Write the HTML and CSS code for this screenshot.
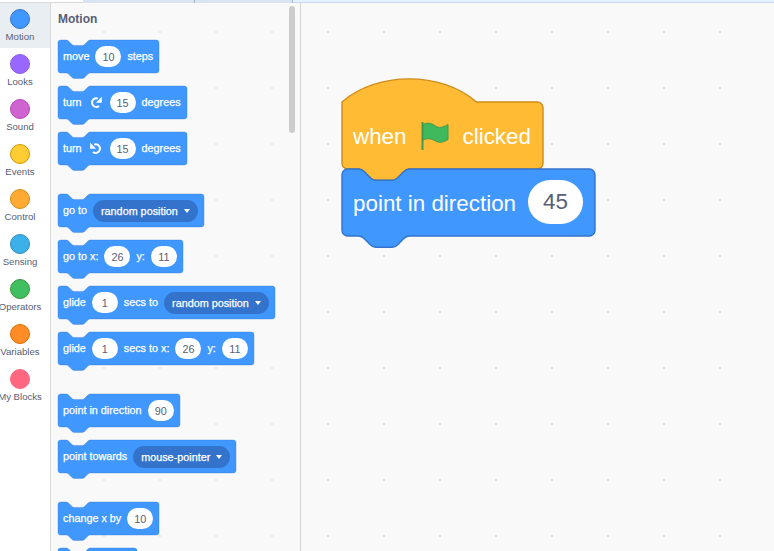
FILE: index.html
```html
<!DOCTYPE html>
<html lang="en">
<head>
  <meta charset="UTF-8">
  <title>Blocks Editor</title>
  <link rel="stylesheet" href="styles.css">
</head>
<body>

  <!-- Tab strip, cut off by the top of the window -->
  <div class="tabs">
    <div class="tab tab-blank"></div>
    <div class="tab tab-first"></div>
    <div class="tab tab-second"></div>
    <div class="tab tab-rest"></div>
  </div>

  <div class="editor">
    <!-- Categories -->
    <nav class="categories">
      <div class="category selected"><span class="dot motion"></span>Motion</div>
      <div class="category"><span class="dot looks"></span>Looks</div>
      <div class="category"><span class="dot sound"></span>Sound</div>
      <div class="category"><span class="dot events"></span>Events</div>
      <div class="category"><span class="dot control"></span>Control</div>
      <div class="category"><span class="dot sensing"></span>Sensing</div>
      <div class="category"><span class="dot operators"></span>Operators</div>
      <div class="category"><span class="dot variables"></span>Variables</div>
      <div class="category"><span class="dot myblocks"></span>My Blocks</div>
    </nav>

    <!-- Flyout -->
    <section class="flyout">
      <h2>Motion</h2>

      <div class="block">move <span class="num">10</span> steps</div>
      <div class="block">turn
        <svg class="turn" viewBox="0 0 14 14"><path d="M10 11A4.3 4.3 0 1 1 8.8 3.6" /><path class="head" d="M12.8 1.8V7.8H6.9Z" /></svg>
        <span class="num">15</span> degrees</div>
      <div class="block">turn
        <svg class="turn" viewBox="0 0 14 14"><path d="M4 11A4.3 4.3 0 1 0 5.2 3.6" /><path class="head" d="M1.2 1.8V7.8H7.1Z" /></svg>
        <span class="num">15</span> degrees</div>

      <div class="block group">go to <span class="menu">random position</span></div>
      <div class="block">go to x: <span class="num">26</span> y: <span class="num">11</span></div>
      <div class="block">glide <span class="num">1</span> secs to <span class="menu">random position</span></div>
      <div class="block">glide <span class="num">1</span> secs to x: <span class="num">26</span> y: <span class="num">11</span></div>

      <div class="block group">point in direction <span class="num">90</span></div>
      <div class="block">point towards <span class="menu">mouse-pointer</span></div>

      <div class="block group">change x by <span class="num">10</span></div>
      <div class="block stub"></div>

      <div class="scrollbar"></div>
    </section>

    <!-- Workspace -->
    <main class="workspace">
      <div class="script">
        <div class="block big hat">when
          <svg class="flag" viewBox="0 0 30 30"><path d="M2.5 1V29" /><path class="cloth" d="M3 3.5C8 1 12 2.5 15.5 5C19 7.5 23 6.5 28 3.5V18.5C23 21.5 19 22 15.5 20C12 18 8 16.5 3 19Z" /></svg>
          clicked</div>
        <div class="block big">point in direction <span class="num">45</span></div>
      </div>
    </main>
  </div>

  <script src="script.js"></script>
</body>
</html>
```

FILE: styles.css
```css
body {
  font-family: 'Liberation Sans', Arial, sans-serif;
  background: #f9f9f9;
  margin: 0;
  height: 551px;
  overflow: hidden;
}

.tabs {
  display: flex;
  height: 3px;
}

.tab-blank {
  width: 83px;
  background: #ffffff;
  border-bottom: 1px solid #d9d9d9;
  box-sizing: border-box;
}

.tab-first {
  width: 112px;
  background: #d9e3f2;
  border-right: 1px solid #a9b8cf;
  box-sizing: border-box;
}

.tab-second {
  width: 98px;
  background: #d9e3f2;
  border-right: 1px solid #a9b8cf;
  box-sizing: border-box;
}

.tab-rest {
  flex: 1;
  background: #e6f0ff;
  border-bottom: 1px solid #c9d8ee;
  box-sizing: border-box;
}

.editor {
  display: flex;
  height: 548px;
}

/* categories */
.categories {
  width: 51px;
  flex: none;
  box-sizing: border-box;
  background: #ffffff;
  border-right: 1px solid #d9d9d9;
  overflow: hidden;
}

.category {
  display: flex;
  flex-direction: column;
  align-items: center;
  height: 45px;
  padding: 6px 10px 0 0;
  box-sizing: border-box;
  font-size: 9.6px;
  line-height: 11px;
  color: #575e75;
  white-space: nowrap;
}

.category.selected {
  background: #e9eef2;
}

.dot {
  flex: none;
  width: 20px;
  height: 20px;
  margin-bottom: 2px;
  border-radius: 50%;
  border: 1px solid;
  box-sizing: border-box;
}

.motion { background: #4098ff; border-color: #3373cc; }
.looks { background: #9966ff; border-color: #8a5ce6; }
.sound { background: #cf63cf; border-color: #bd42bd; }
.events { background: #ffcc33; border-color: #cc9900; }
.control { background: #ffab33; border-color: #cf8b17; }
.sensing { background: #3cb0e8; border-color: #2e8eb8; }
.operators { background: #40bf60; border-color: #389438; }
.variables { background: #ff8c26; border-color: #db6e00; }
.myblocks { background: #ff6680; border-color: #ff6680; }

/* flyout */
.flyout {
  position: relative;
  isolation: isolate;
  width: 250px;
  flex: none;
  box-sizing: border-box;
  padding: 0 0 0 7px;
  border-right: 1px solid #d4d4d4;
  display: flex;
  flex-direction: column;
  align-items: flex-start;
  overflow: hidden;
  background-image: radial-gradient(circle at 1px 1px, #e9e9e9 1px, transparent 1.2px);
  background-size: 56px 56px;
  background-position: 52px 28px;
}

.flyout h2 {
  font-size: 12px;
  line-height: 14px;
  color: #575e75;
  margin: 9px 0 14px;
  flex: none;
}

.flyout .block {
  margin-bottom: 13px;
  -webkit-text-stroke: 0.25px #ffffff;
}

.flyout .num {
  -webkit-text-stroke: 0;
}

.flyout .block.group {
  margin-top: 16px;
}

.scrollbar {
  position: absolute;
  left: 238px;
  top: 3px;
  width: 6px;
  height: 127px;
  background: #cccccc;
  border-radius: 3px;
}

/* blocks */
.block {
  position: relative;
  flex: none;
  display: flex;
  align-items: center;
  gap: 6px;
  height: 33px;
  padding: 0 6px 2px 5px;
  box-sizing: border-box;
  font-size: 10.8px;
  color: #ffffff;
  white-space: nowrap;
  width: fit-content;
}

.block.stub {
  width: 79px;
}

.shape {
  position: absolute;
  left: 0;
  top: 0;
  overflow: visible;
  z-index: -1;
}

.num {
  display: flex;
  justify-content: center;
  align-items: center;
  min-width: 26px;
  height: 21px;
  margin-bottom: -2px;
  border-radius: 11px;
  background: #ffffff;
  color: #575e75;
}

.menu {
  display: flex;
  align-items: center;
  height: 22px;
  padding: 0 8px;
  margin-bottom: -2px;
  border-radius: 11px;
  background: #3373cc;
}

.menu::after {
  content: "";
  margin-left: 6px;
  border-left: 3.5px solid transparent;
  border-right: 3.5px solid transparent;
  border-top: 4px solid #ffffff;
}

.turn {
  width: 14px;
  height: 14px;
  margin: 1px 1px 0;
}

.turn path {
  fill: none;
  stroke: #ffffff;
  stroke-width: 2;
}

.turn .head {
  fill: #ffffff;
  stroke: none;
}

/* workspace */
.workspace {
  position: relative;
  isolation: isolate;
  flex: 1;
  background-image: radial-gradient(circle at 1px 1px, #dddddd 1px, transparent 1.2px);
  background-size: 56px 56px;
  background-position: 26px 28px;
}

.script {
  position: absolute;
  left: 41px;
  top: 98.5px;
}

.block.big {
  height: 67px;
  padding: 4px 12px 0 11px;
  gap: 12px;
  font-size: 22.4px;
}

.block.big .num {
  min-width: 55px;
  height: 44px;
  margin-bottom: 4px;
  border-radius: 22px;
}

.block.hat {
  height: 67px;
  gap: 13px;
}

.flag {
  width: 30px;
  height: 30px;
  margin-bottom: 2px;
}

.flag path {
  fill: none;
  stroke: #3f9a50;
  stroke-width: 2;
}

.flag .cloth {
  fill: #40b85c;
  stroke-width: 1;
}
```

FILE: script.js
```js
// draws the puzzle-piece outline behind each block, sized to its content
function blockPath(w, h, isHat) {
  let top = 'M0 4A4 4 0 0 1 4 0H12c2 0 3 1 4 2l4 4c1 1 2 2 4 2h12c2 0 3-1 4-2l4-4c1-1 2-2 4-2';
  if (isHat) {
    top = 'M0 0c25-22 71-22 96 0';
  }
  return top + 'H' + (w - 4) + 'a4 4 0 0 1 4 4V' + (h - 4) + 'a4 4 0 0 1-4 4H48' +
    'c-2 0-3 1-4 2l-4 4c-1 1-2 2-4 2h-12c-2 0-3-1-4-2l-4-4c-1-1-2-2-4-2H4a4 4 0 0 1-4-4Z';
}

document.querySelectorAll('.block').forEach(function (block) {
  const big = block.classList.contains('big');
  const hat = block.classList.contains('hat');
  const scale = big ? 1.4 : 0.675;
  const w = block.offsetWidth / scale;
  const h = block.offsetHeight / scale;

  const fill = hat ? '#ffbb33' : '#4098ff';
  const line = hat ? '#cf8b17' : '#3373cc';

  const ns = 'http://www.w3.org/2000/svg';
  const svg = document.createElementNS(ns, 'svg');
  svg.setAttribute('class', 'shape');
  svg.setAttribute('width', block.offsetWidth);
  svg.setAttribute('height', block.offsetHeight);

  const path = document.createElementNS(ns, 'path');
  path.setAttribute('d', blockPath(w, h, hat));
  path.setAttribute('transform', 'scale(' + scale + ')');
  path.setAttribute('fill', fill);
  path.setAttribute('stroke', line);
  path.setAttribute('stroke-opacity', big ? '1' : '0.5');
  svg.appendChild(path);
  block.appendChild(svg);
});
```
